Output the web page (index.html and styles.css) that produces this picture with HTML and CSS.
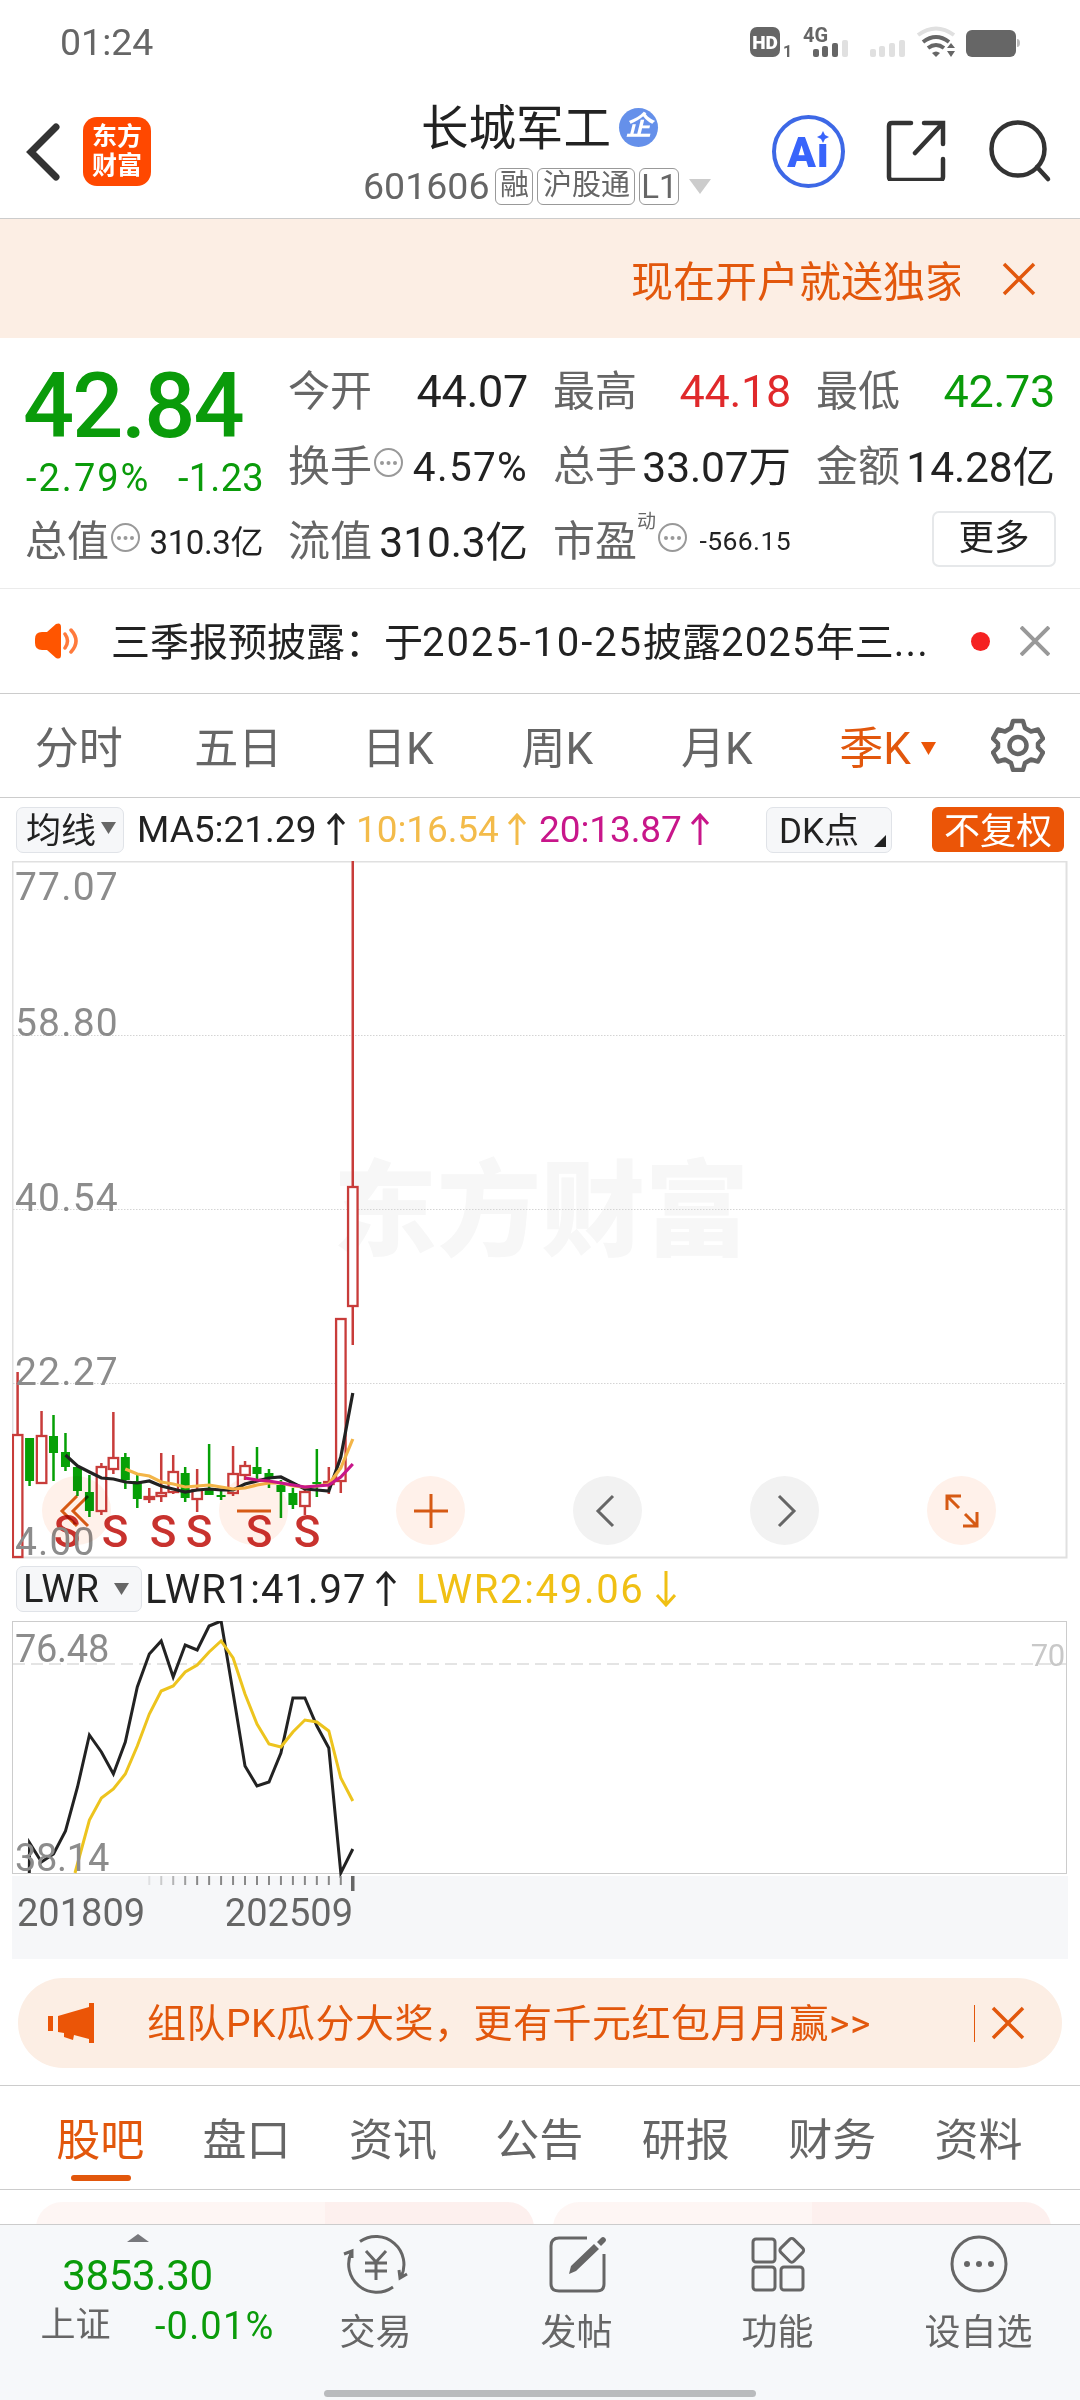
FILE: index.html
```html
<!DOCTYPE html>
<html lang="zh-CN">
<head>
    <meta charset="UTF-8">
    <meta name="viewport" content="width=device-width, initial-scale=1.0">
    <title>长城军工 601606</title>
    <link rel="stylesheet" href="styles.css">
</head>
<body>
<div class="status-bar">
    <span class="time">01:24</span>
    <svg class="status-icons" width="280" height="36" viewBox="0 0 280 36">
        <rect x="0" y="1" width="30" height="30" rx="7" fill="#666"/>
        <text x="15" y="23" class="hd" text-anchor="middle">HD</text>
        <text x="33" y="31" class="sim">1</text>
        <text x="53" y="16" class="net">4G</text>
        <g fill="#666">
            <rect x="63" y="23" width="6" height="8" rx="2"/>
            <rect x="72" y="20" width="6" height="11" rx="2"/>
            <rect x="82" y="17" width="6" height="14" rx="2"/>
        </g>
        <g fill="#e0e0e0">
            <rect x="92" y="14" width="6" height="17" rx="2"/>
            <rect x="120" y="23" width="6" height="8" rx="2"/>
            <rect x="129" y="20" width="6" height="11" rx="2"/>
            <rect x="139" y="17" width="6" height="14" rx="2"/>
            <rect x="149" y="14" width="6" height="17" rx="2"/>
        </g>
        <g fill="none" stroke-width="4">
            <path d="M168 9q18-13 36 0" stroke="#e0e0e0"/>
            <path d="M173 16q13-10 26 0M178 22q8-6 16 0" stroke="#666"/>
        </g>
        <path d="M182 27q4-3 8 0l-4 4zM197 22l4-5 4 5zM197 25h8l-4 6z" fill="#666"/>
        <rect x="216" y="4" width="50" height="27" rx="6" fill="#666"/>
        <path d="M267 13q3 0 3 4t-3 4z" fill="#bbb"/>
    </svg>
</div>

<header class="header">
    <svg class="back" width="36" height="60" viewBox="0 0 36 60"><path d="M31 5L6 30l25 25"/></svg>
    <div class="logo">东方<br>财富</div>
    <div class="stock">
        <div class="stock-name">长城军工<span class="badge">企</span></div>
        <div class="stock-code">601606<span class="tag one">融</span><span class="tag">沪股通</span><span class="tag l1">L1</span><svg width="22" height="15" viewBox="0 0 22 15"><path d="M0 0h22L11 15z" fill="#ccc"/></svg></div>
    </div>
    <div class="ai">Aı<svg width="12" height="12" viewBox="0 0 12 12"><path d="M6 0l2 4 4 2-4 2-2 4-2-4-4-2 4-2z" fill="#3864fb"/></svg></div>
    <svg class="share" width="62" height="62" viewBox="0 0 62 62"><path d="M25 4H6q-3 0-3 3v51q0 3 3 3h48q3 0 3-3V40M38 4h19v21M56 5L29 34"/></svg>
    <svg class="search" width="66" height="66" viewBox="0 0 66 66"><circle cx="31" cy="29" r="26.5"/><path d="M50 47l11 12"/></svg>
</header>

<div class="banner">
    <span class="banner-text">现在开户就送独家</span>
    <svg width="34" height="34" viewBox="0 0 34 34" class="close-orange"><path d="M2 2l30 30M32 2L2 32"/></svg>
</div>

<section class="quote">
    <div class="price-cell">
        <div class="price">42.84</div>
        <div class="change"><span class="percent">-2.79%</span><span>-1.23</span></div>
    </div>
    <div class="cell"><label>今开</label><b class="xl">44.07</b></div>
    <div class="cell"><label>最高</label><b class="xl red">44.18</b></div>
    <div class="cell"><label>最低</label><b class="xl green">42.73</b></div>
    <div class="cell"><label>换手</label><i class="dots"></i><b class="md">4.57%</b></div>
    <div class="cell"><label>总手</label><b>33.07万</b></div>
    <div class="cell"><label>金额</label><b>14.28亿</b></div>
    <div class="cell"><label>总值</label><i class="dots"></i><b class="sm">310.3亿</b></div>
    <div class="cell"><label>流值</label><b>310.3亿</b></div>
    <div class="cell"><label>市盈</label><sup>动</sup><i class="dots"></i><b class="xs">-566.15</b></div>
    <div class="cell end"><span class="more">更多</span></div>
</section>

<div class="news">
    <svg width="46" height="36" viewBox="0 0 46 36"><path d="M8 9h5L22 1q5-2 5 3v28q0 5-5 3l-9-8H8q-7 0-7-7v-4q0-7 7-7z" fill="#ff5500"/><path d="M31 11q5 7 0 14M37 7q10 11 0 22" fill="none" stroke="#ff7a3c" stroke-width="3.5" stroke-linecap="round"/></svg>
    <span class="news-text">三季报预披露：于<span class="date">2025-10-25</span>披露<span class="year">2025</span>年三<span class="year">...</span></span>
    <span class="red-dot"></span>
    <svg width="30" height="30" viewBox="0 0 30 30" class="close-gray"><path d="M1 1l28 28M29 1L1 29"/></svg>
</div>

<nav class="periods">
    <span>分时</span><span>五日</span><span>日K</span><span>周K</span><span>月K</span>
    <span class="active">季K<svg width="16" height="14" viewBox="0 0 16 14"><path d="M0 0h15L7.500 13z" fill="#eb5507"/></svg></span>
    <svg class="gear" width="54" height="54" viewBox="0 0 54 54">
        <path d="M22 3h10l2 7 6 3.500 7-2 5 9-5 5v4l5 5-5 9-7-2-6 3.500-2 7H22l-2-7-6-3.500-7 2-5-9 5-5v-4l-5-5 5-9 7 2 6-3.500z"/>
        <circle cx="27" cy="27.500" r="8.500"/>
    </svg>
</nav>

<div class="ma-row">
    <span class="select">均线<svg width="15" height="12" viewBox="0 0 15 12"><path d="M0 0h15L7.500 12z" fill="#666"/></svg></span>
    <span class="ma5">MA5:21.29<svg class="arrow" width="18" height="33" viewBox="0 0 18 33"><path d="M9 32V2M1 11l8-9 8 9"/></svg></span>
    <span class="ma10">10:16.54<svg class="arrow" width="18" height="33" viewBox="0 0 18 33"><path d="M9 32V2M1 11l8-9 8 9"/></svg></span>
    <span class="ma20">20:13.87<svg class="arrow" width="18" height="33" viewBox="0 0 18 33"><path d="M9 32V2M1 11l8-9 8 9"/></svg></span>
    <span class="select dk">DK点<svg width="12" height="12" viewBox="0 0 12 12"><path d="M12 0v12H0z" fill="#222"/></svg></span>
    <span class="fq">不复权</span>
</div>

<div class="chart">
    <svg class="plot" id="kline" width="1056" height="700" viewBox="0 0 1056 700">
        <text x="529" y="387" class="watermark" text-anchor="middle">东方财富</text>
        <rect x="0.500" y="0.500" width="1054" height="696" class="frame"/>
        <path d="M1 174.500H1054M1 348.500H1054M1 522.500H1054" class="grid"/>
    </svg>
    <div class="tools">
        <span><svg width="36" height="36" viewBox="0 0 36 36"><path d="M18 3L3 18l15 15M29 3L14 18l15 15"/></svg></span>
        <span><svg width="36" height="36" viewBox="0 0 36 36"><path d="M1 18h34"/></svg></span>
        <span><svg width="36" height="36" viewBox="0 0 36 36"><path d="M1 18h34M18 1v34"/></svg></span>
        <span class="gray"><svg width="36" height="36" viewBox="0 0 36 36"><path d="M23 3L8 18l15 15"/></svg></span>
        <span class="gray"><svg width="36" height="36" viewBox="0 0 36 36"><path d="M12 3l15 15-15 15"/></svg></span>
        <span><svg width="36" height="36" viewBox="0 0 36 36"><path d="M3 17V3h14M3 3l12 12M33 19v14H19M33 33L21 21"/></svg></span>
    </div>
</div>

<div class="lwr-row">
    <span class="select">LWR<svg width="15" height="12" viewBox="0 0 15 12"><path d="M0 0h15L7.500 12z" fill="#666"/></svg></span>
    <span class="lwr1">LWR1:41.97<svg class="arrow" width="20" height="36" viewBox="0 0 20 36"><path d="M10 35V2M1 12l9-10 9 10"/></svg></span>
    <span class="lwr2">LWR2:49.06<svg class="arrow" width="20" height="36" viewBox="0 0 20 36"><path d="M10 0v34M1 24l9 10 9-10"/></svg></span>
</div>

<div class="sub-chart">
    <svg class="plot" id="lwr" width="1056" height="338" viewBox="0 0 1056 338">
        <rect x="0" y="255" width="1056" height="83" fill="#f6f7f9"/>
        <rect x="0.500" y="0.500" width="1054" height="252" class="frame dark"/>
        <path d="M1 43H1054" class="dash"/>
        <text x="1053" y="45" class="level" text-anchor="end">70</text>
    </svg>
</div>

<div class="promo">
    <svg width="46" height="40" viewBox="0 0 46 40"><path d="M0 13h5v15H0zM10 13L41 4V0h5v40h-5v-4l-15-4-1 5-9-3v-4l-6-1z" fill="#eb5507"/></svg>
    <span class="promo-text">组队PK瓜分大奖，更有千元红包月月赢&gt;&gt;</span>
    <span class="divider"></span>
    <svg width="34" height="34" viewBox="0 0 34 34" class="close-orange"><path d="M2 2l30 30M32 2L2 32"/></svg>
</div>

<nav class="sections">
    <span class="active">股吧</span><span>盘口</span><span>资讯</span><span>公告</span><span>研报</span><span>财务</span><span>资料</span>
</nav>

<div class="cards"><div class="card"></div><div class="card"></div></div>

<footer class="bottom-bar">
    <div class="index">
        <svg width="22" height="8" viewBox="0 0 22 8"><path d="M0 8L11 0l11 8z" fill="#77787c"/></svg>
        <div class="index-value">3853.30</div>
        <div class="index-row"><span>上证</span><span class="green">-0.01%</span></div>
    </div>
    <div class="action">
        <svg width="66" height="60" viewBox="0 0 66 60"><path d="M17 7.500A28 28 0 0 1 58 43M50 53A28 28 0 0 1 8.500 18M1 20l8-3v7M64 40l-7 4-1-8M23 17l10 11 10-11M33 28v18M22 29h22M22 37h22"/></svg>
        <span>交易</span>
    </div>
    <div class="action">
        <svg width="60" height="60" viewBox="0 0 60 60"><path d="M40 4H12q-8 0-8 8v38q0 7 8 7h38q7 0 7-7V20"/><path d="M22 40l2-8L47 10l5 5-23 22zM50 8l4-4q2-2 4 0t0 4l-4 4z" fill="#666" stroke="none"/></svg>
        <span>发帖</span>
    </div>
    <div class="action">
        <svg width="60" height="60" viewBox="0 0 60 60"><rect x="5" y="5" width="22" height="23" rx="3"/><rect x="5" y="33" width="22" height="23" rx="3"/><rect x="33" y="33" width="22" height="23" rx="3"/><rect x="34.500" y="7" width="18.500" height="18.500" rx="3" transform="rotate(45 43.700 16.300)"/></svg>
        <span>功能</span>
    </div>
    <div class="action">
        <svg width="60" height="60" viewBox="0 0 60 60"><circle cx="30" cy="30" r="27"/><g fill="#666" stroke="none"><circle cx="18" cy="30" r="3"/><circle cx="30" cy="30" r="3"/><circle cx="42" cy="30" r="3"/></g></svg>
        <span>设自选</span>
    </div>
    <div class="home-bar"></div>
</footer>

<script src="chart.js"></script>
</body>
</html>
```

FILE: styles.css
```css
* {
    box-sizing: border-box;
    margin: 0;
    padding: 0;
}
body {
    width: 1080px;
    height: 2400px;
    overflow: hidden;
    background: #fff;
    color: #222;
    font-family: Roboto, "Noto Sans CJK SC", sans-serif;
}
svg {
    display: block;
    flex: none;
}
.red { color: #e0292b; }
.green { color: #0a9b0a; }

/* status bar */
.status-bar {
    display: flex;
    justify-content: space-between;
    height: 84px;
    padding: 25px 50px 0 60px;
}
.status-icons {
    margin-top: 1px;
    overflow: visible;
}
.time {
    font-size: 37.500px;
    line-height: 34px;
    color: #666;
}
.hd {
    font-size: 19px;
    font-weight: 900;
    fill: #fff;
}
.sim {
    font-size: 16px;
    font-weight: 700;
    fill: #666;
}
.net {
    font-size: 20px;
    font-weight: 700;
    fill: #666;
}

/* header */
.header {
    display: flex;
    height: 135px;
    padding-left: 25px;
    border-bottom: 1px solid #ccc;
}
.back {
    margin-top: 38px;
    fill: none;
    stroke: #333;
    stroke-width: 7;
    stroke-linecap: round;
}
.logo {
    width: 68px;
    height: 69px;
    margin: 33px 0 0 22px;
    padding-top: 5px;
    border-radius: 14px;
    background: #ff4800;
    color: #fff;
    font-size: 25px;
    font-weight: 700;
    line-height: 29px;
    text-align: center;
}
.stock {
    width: 490px;
    margin-left: 140px;
    padding: 0 0 0 72px;
}
.stock-name {
    display: flex;
    align-items: center;
    height: 60px;
    margin-top: 10px;
    padding-left: 58px;
    font-size: 47.500px;
}
.badge {
    width: 39px;
    height: 39px;
    margin: 7px 0 0 8px;
    border-radius: 50%;
    background: #6590ea;
    color: #fff;
    font-size: 27px;
    font-weight: 700;
    font-style: italic;
    line-height: 37px;
    text-align: center;
}
.stock-code {
    display: flex;
    align-items: center;
    height: 36px;
    margin-top: 14px;
    font-size: 37.5px;
    color: #666;
}
.tag {
    width: 98px;
    height: 37px;
    margin-left: 4px;
    border: 1px solid #999;
    border-radius: 6px;
    font-size: 29px;
    line-height: 33px;
    text-align: center;
}
.tag.one {
    width: 38px;
    margin-left: 6px;
}
.tag.l1 {
    width: 40px;
    margin-right: 10px;
    font-size: 33px;
    line-height: 36px;
}
.ai {
    display: flex;
    justify-content: center;
    position: relative;
    width: 73px;
    height: 73px;
    margin: 31px 0 0 -9px;
    border: 4px solid #3d68e6;
    border-radius: 50%;
    color: #3864fb;
    font-size: 42px;
    font-weight: 900;
    line-height: 67px;
    letter-spacing: 1px;
}
.ai svg {
    position: absolute;
    top: 12px;
    right: 12px;
}
.share, .search {
    fill: none;
    stroke: #333;
    stroke-width: 4.500;
    stroke-linecap: round;
}
.share {
    margin: 35px 0 0 41px;
}
.search {
    margin: 36px 0 0 39px;
}

.banner {
    display: flex;
    align-items: center;
    justify-content: flex-end;
    height: 119px;
    padding: 0 44px 0 0;
    background: #fceee4;
}
.banner-text {
    width: 328px;
    margin: -1px 42px 0 0;
    overflow: hidden;
    white-space: nowrap;
    font-size: 42px;
    text-indent: -1px;
    color: #e2570c;
}
.close-orange {
    fill: none;
    stroke: #e2570c;
    stroke-width: 3.500;
}

/* quote */
.quote {
    display: grid;
    grid-template-columns: 238px 240px 238px 239px;
    grid-template-rows: 75px 75px 75px;
    column-gap: 25px;
    height: 251px;
    padding: 16px 25px 0;
    border-bottom: 1px solid #ebebeb;
}
.price-cell {
    grid-row: 1 / 3;
    color: #0a9b0a;
}
.price {
    margin: 7px 0 0 -2px;
    font-size: 90px;
    font-weight: 500;
    line-height: 92px;
    letter-spacing: -2px;
}
.change {
    display: flex;
    justify-content: space-between;
    margin: 3px -1px 0 1px;
    font-size: 38px;
    line-height: 44px;
    letter-spacing: 0.300px;
    white-space: nowrap;
}
.change .percent {
    letter-spacing: 2px;
}
.cell {
    display: flex;
    align-items: center;
    white-space: nowrap;
}
.cell label {
    font-size: 42px;
    line-height: 60px;
    color: #666;
}
.cell b {
    margin: -6px 0 0 auto;
    font-size: 42.500px;
    font-weight: 400;
    letter-spacing: -0.100px;
}
.cell b.xl { margin-top: 0; font-size: 45px; letter-spacing: -0.300px; }
.cell b.md { margin-top: 0; font-size: 40.500px; letter-spacing: 1.300px; }
.cell b.sm { margin-top: -3px; font-size: 33px; letter-spacing: -0.400px; }
.cell b.xs { margin-top: -2px; font-size: 26.500px; letter-spacing: 0.400px; }
.cell sup {
    align-self: flex-start;
    margin: 2px 0 0 0;
    font-size: 19px;
    color: #666;
}
.dots {
    position: relative;
    width: 29px;
    height: 29px;
    margin: -9px 0 0 2px;
    border: 2px solid #999;
    border-radius: 50%;
}
.dots::after {
    content: "";
    position: absolute;
    top: 11px;
    left: 4px;
    width: 4px;
    height: 4px;
    border-radius: 50%;
    background: #999;
    box-shadow: 6.500px 0 #999, 13px 0 #999;
}
.cell.end {
    justify-content: flex-end;
}
.more {
    width: 124px;
    height: 56px;
    margin: -5px -1px 0 0;
    border: 2px solid #e6e8ea;
    border-radius: 7px;
    font-size: 35.500px;
    line-height: 51px;
    text-align: center;
}

.news {
    display: flex;
    align-items: center;
    height: 105px;
    padding: 0 30px 0 34px;
    border-bottom: 1px solid #ccc;
}
.news-text {
    width: 838px;
    margin: -5px 0 0 31px;
    font-size: 39px;
    white-space: nowrap;
}
.news-text .date {
    margin-left: -1px;
    font-size: 40px;
    letter-spacing: 1.900px;
}
.news-text .year {
    font-size: 40px;
    letter-spacing: 1.200px;
}
.red-dot {
    width: 19px;
    height: 19px;
    margin: 0 30px 0 23px;
    border-radius: 50%;
    background: #f52222;
}
.close-gray {
    fill: none;
    stroke: #999;
    stroke-width: 4;
}

/* period tabs */
.periods {
    display: flex;
    align-items: center;
    height: 104px;
    border-bottom: 1px solid #ccc;
    font-size: 44px;
    color: #666;
}
.periods span {
    width: 159.500px;
    padding-top: 6px;
    text-indent: -2px;
    text-align: center;
    line-height: 60px;
}
.periods .active {
    display: flex;
    align-items: center;
    justify-content: center;
    gap: 10px;
    width: 180px;
    padding-left: 3px;
    color: #e2570c;
}
.gear {
    margin-left: 13px;
    margin-top: -2px;
    fill: none;
    stroke: #666;
    stroke-width: 4.500;
    stroke-linejoin: round;
}

/* indicator rows */
.ma-row, .lwr-row {
    display: flex;
    align-items: center;
    height: 63px;
    padding-left: 16px;
    font-size: 37px;
}
.ma-row > span, .lwr-row > span {
    display: flex;
    align-items: center;
    white-space: nowrap;
}
.ma-row > .select, .ma-row > .fq {
    padding-bottom: 4px;
}
.select {
    gap: 5px;
    width: 108px;
    height: 46px;
    padding-left: 9px;
    border: 1px solid #e0e3e8;
    border-radius: 7px;
    background: #f6f7f9;
    font-size: 35px;
}
.arrow {
    margin-left: 11px;
    fill: none;
    stroke: currentColor;
    stroke-width: 3;
}
.ma5 { width: 217px; margin-left: 13px; }
.ma10 { width: 183px; margin-left: 2px; color: #f3bb4a; }
.ma20 { width: 181px; color: #c8168a; }
.ma10, .ma20 { letter-spacing: -0.100px; }
.ma10 .arrow, .ma20 .arrow { margin-left: 9px; }
.dk {
    position: relative;
    width: 126px;
    margin-left: 46px;
    padding-left: 12px;
}
.dk svg {
    position: absolute;
    right: 5px;
    bottom: 5px;
}
.fq {
    justify-content: center;
    width: 132px;
    height: 45px;
    margin-left: 40px;
    border-radius: 6px;
    background: #eb5507;
    color: #fff;
    font-size: 36px;
}
.lwr-row {
    height: 64px;
    font-size: 40px;
}
.lwr-row .select {
    gap: 15px;
    width: 126px;
    padding-left: 6px;
    font-size: 38px;
    letter-spacing: 0.500px;
}
.lwr1 { width: 271px; margin-left: 3px; letter-spacing: 1px; }
.lwr1 .arrow { margin-left: 9px; }
.lwr2 { color: #f0c014; letter-spacing: 1.700px; }

/* charts */
.chart {
    position: relative;
    height: 696px;
    padding-left: 12px;
}
.sub-chart {
    height: 338px;
    padding-left: 12px;
}
.plot text {
    font-size: 39px;
    letter-spacing: 1.200px;
    fill: #8c8c8c;
}
.sub-chart .plot text {
    font-size: 38px;
    letter-spacing: -0.300px;
}
.plot .watermark {
    font-size: 104px;
    font-weight: 900;
    letter-spacing: 0;
    fill: #f7f7f7;
}
.sub-chart .plot .level {
    font-size: 31px;
    fill: #c8c8c8;
}
.plot .signal {
    font-size: 44px;
    font-weight: 500;
    letter-spacing: 0;
    fill: #c8322e;
}
.sub-chart .plot .month {
    letter-spacing: 0;
    fill: #666;
}
.frame {
    fill: none;
    stroke: #e0e0e0;
    stroke-width: 2;
}
.frame.dark {
    stroke: #ccc;
    stroke-width: 1;
}
.grid {
    stroke: #d4d4d4;
    stroke-dasharray: 1.500 1.500;
}
.dash {
    stroke: #dcdcdc;
    stroke-width: 1.500;
    stroke-dasharray: 12 6;
}
.tools {
    position: absolute;
    left: 42px;
    bottom: 12px;
    display: flex;
    gap: 108px;
    mix-blend-mode: multiply;
}
.tools span {
    display: flex;
    align-items: center;
    justify-content: center;
    width: 69px;
    height: 69px;
    border-radius: 50%;
    background: #fff1ea;
}
.tools svg {
    fill: none;
    stroke: #d65a14;
    stroke-width: 3;
}
.tools .gray {
    background: #f2f2f2;
}
.tools .gray svg {
    stroke: #666;
}

.promo {
    display: flex;
    align-items: center;
    width: 1044px;
    height: 90px;
    margin: 19px 0 0 18px;
    padding-left: 30px;
    border-radius: 45px;
    background: #fceee4;
    color: #e2570c;
}
.promo-text {
    width: 827px;
    margin: -7px 0 0 53px;
    font-size: 39px;
    letter-spacing: 0.500px;
    white-space: nowrap;
}
.divider {
    width: 1px;
    height: 37px;
    margin-right: 16px;
    background: #e2570c;
}

/* section tabs */
.sections {
    display: flex;
    height: 105px;
    margin-top: 17px;
    padding-left: 27px;
    border-top: 1px solid #ccc;
    border-bottom: 1px solid #ccc;
    font-size: 44px;
    color: #666;
}
.sections span {
    width: 146.400px;
    line-height: 110px;
    text-align: center;
}
.sections .active {
    position: relative;
    color: #e2570c;
}
.sections .active::after {
    content: "";
    position: absolute;
    left: 44px;
    bottom: 8px;
    width: 60px;
    height: 6px;
    border-radius: 3px;
    background: #e2570c;
}

.cards {
    display: flex;
    gap: 19px;
    height: 34px;
    padding: 12px 0 0 36px;
    overflow: hidden;
}
.card {
    width: 498px;
    height: 60px;
    border-radius: 26px;
    background: linear-gradient(90deg, #fef6f4 58%, #fdf0ee 58%);
}
.card + .card {
    background: linear-gradient(90deg, #fef6f4 52%, #fdf0ee 52%);
}

/* bottom bar */
.bottom-bar {
    position: relative;
    display: flex;
    height: 176px;
    border-top: 1px solid #ccc;
    background: #f6f8fa;
    color: #666;
}
.index {
    display: flex;
    flex-direction: column;
    align-items: center;
    width: 275px;
    padding-top: 9px;
}
.index-value {
    margin-top: 12px;
    font-size: 42px;
    line-height: 44px;
    letter-spacing: -0.300px;
    color: #0a9b0a;
}
.index-row {
    display: flex;
    align-items: center;
    justify-content: space-between;
    width: 234px;
    margin: 3px 0 0 40px;
    font-size: 35px;
    line-height: 50px;
}
.index-row .green {
    font-size: 38px;
    letter-spacing: 1.200px;
}
.action {
    display: flex;
    flex-direction: column;
    align-items: center;
    width: 201px;
    padding-top: 9px;
    font-size: 36px;
}
.action span {
    margin-top: 13px;
    line-height: 52px;
}
.action svg {
    fill: none;
    stroke: #666;
    stroke-width: 3;
}
.home-bar {
    position: absolute;
    left: 324px;
    bottom: 3px;
    width: 432px;
    height: 7px;
    border-radius: 4px;
    background: #b9bbbd;
}
```

FILE: chart.js
```js
const NS = 'http://www.w3.org/2000/svg';
const STEP = 11.97;
const RED = '#c83c3a';
const GREEN = '#06a006';

// type, high, body top, body bottom, low
const candles = [
    ['r', 511, 574, 696, 696], ['g', 577, 577, 620, 625], ['r', 550, 575, 622, 623],
    ['g', 554, 575, 592, 620], ['g', 572, 591, 606, 610], ['g', 606, 606, 630, 635],
    ['g', 614, 631, 650, 656], ['r', 602, 606, 650, 654], ['r', 551, 597, 608, 613],
    ['g', 592, 596, 619, 628], ['g', 612, 620, 638, 647], ['r', 627, 636, 638, 642],
    ['r', 592, 632, 635, 641], ['r', 594, 611, 631, 633], ['g', 606, 612, 637, 641],
    ['r', 608, 629, 638, 651], ['g', 583, 627, 634, 634], ['g', 629, 634, 636, 639],
    ['r', 585, 613, 632, 635], ['r', 600, 605, 614, 619], ['g', 586, 606, 613, 619],
    ['g', 608, 612, 617, 627], ['g', 619, 624, 631, 657], ['g', 627, 632, 644, 648],
    ['r', 629, 631, 645, 654], ['g', 588, 621, 623, 636], ['r', 606, 621, 623, 633],
    ['r', 458, 458, 620, 632], ['r', 0, 326, 445, 484]
];
const ma5 = [594, 605, 611, 617, 618, 621, 622, 620, 625, 628, 631, 629, 628, 629, 629, 623, 620, 617, 616, 622, 628, 629, 630, 596, 532];
const ma10 = [608, 613, 615, 621, 623, 626, 625, 624, 626, 628, 627, 624, 622, 622, 625, 626, 625, 623, 607, 578];
const ma20 = [617, 619, 620, 622, 624, 626, 625, 624, 616, 603];
const lwr1 = [222, 241, 233, 210, 166, 114, 131, 153, 121, 66, 33, 20, 56, 24, 29, 5, 0, 72, 145, 165, 161, 132, 77, 77, 105, 127, 252, 228];
const lwr2 = [199, 177, 168, 153, 125, 93, 70, 65, 51, 44, 31, 20, 37, 73, 103, 123, 126, 111, 99, 101, 110, 157, 180];

function add(svg, tag, attrs, text) {
    const el = document.createElementNS(NS, tag);
    for (const key in attrs) el.setAttribute(key, attrs[key]);
    if (text) el.textContent = text;
    svg.appendChild(el);
}

function x(i) {
    return 5.6 + i * STEP;
}

function line(svg, values, start, color, width, prefix) {
    const pts = values.map((v, i) => x(i + start).toFixed(1) + ',' + v).join(' ');
    add(svg, 'polyline', {points: (prefix || '') + pts, fill: 'none', stroke: color, 'stroke-width': width});
}

const kline = document.getElementById('kline');
candles.forEach(([type, high, top, bottom, low], i) => {
    const color = type === 'r' ? RED : GREEN;
    add(kline, 'path', {d: `M${x(i)} ${high}V${top}M${x(i)} ${bottom}V${low}`, stroke: color, 'stroke-width': 2.5});
    if (type === 'r') {
        add(kline, 'rect', {x: x(i) - 4.7, y: top, width: 9.5, height: bottom - top, fill: '#fff', stroke: color, 'stroke-width': 2.3});
    } else {
        add(kline, 'rect', {x: x(i) - 4.5, y: top, width: 9, height: bottom - top, fill: color});
    }
});
line(kline, ma5, 4, '#222', 3.2);
line(kline, ma10, 9, '#f3b548', 3.2);
line(kline, ma20, 19, '#c8168a', 3.2);
[55, 103, 151, 187, 247, 295].forEach(cx => {
    add(kline, 'text', {x: cx, y: 686, class: 'signal', 'text-anchor': 'middle'}, 'S');
});
[['77.07', 39], ['58.80', 175], ['40.54', 350], ['22.27', 524], ['4.00', 694]].forEach(([label, y]) => {
    add(kline, 'text', {x: 3, y: y}, label);
});

const lwr = document.getElementById('lwr');
line(lwr, lwr1, 1, '#222', 3, '17.3,252 ');
line(lwr, lwr2, 6, '#edc41e', 3, '63,252 ');
add(lwr, 'text', {x: 3, y: 41}, '76.48');
add(lwr, 'text', {x: 3, y: 250}, '38.14');
for (let i = 11; i < 28; i++) {
    add(lwr, 'path', {d: `M${x(i)} 255v9`, stroke: '#888', 'stroke-width': 2, opacity: Math.min(1, (i - 10) / 5)});
}
add(lwr, 'path', {d: `M${x(28)} 255v15`, stroke: '#666', 'stroke-width': 3.5});
add(lwr, 'text', {x: 5, y: 305, class: 'month'}, '201809');
add(lwr, 'text', {x: 341, y: 305, 'text-anchor': 'end', class: 'month'}, '202509');
```
